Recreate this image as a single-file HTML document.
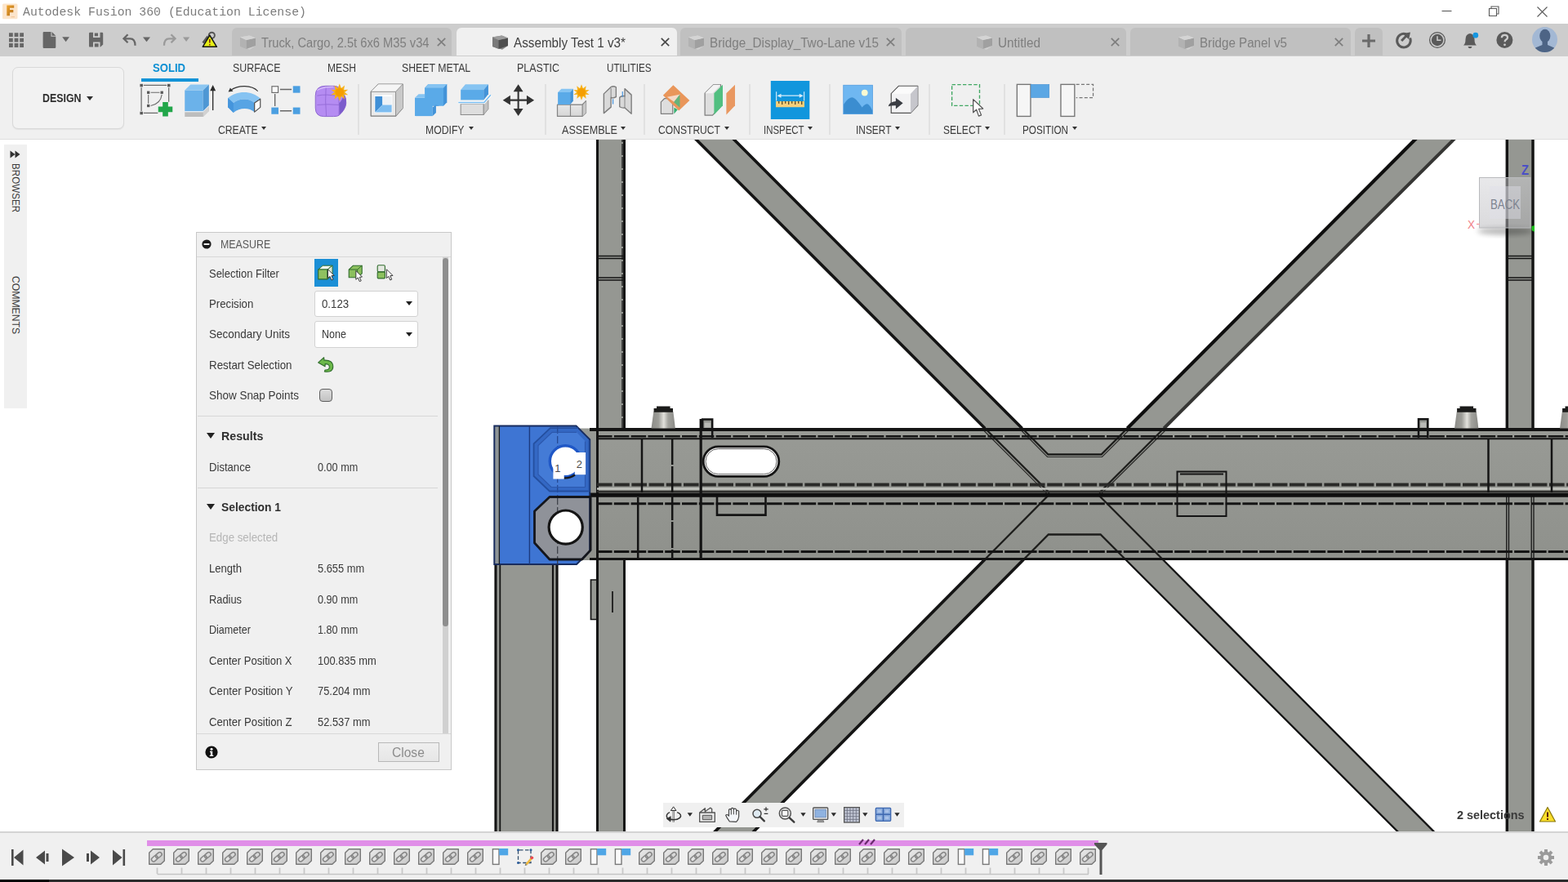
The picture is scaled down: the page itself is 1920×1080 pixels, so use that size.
<!DOCTYPE html>
<html lang="en"><head><meta charset="utf-8"><title>Autodesk Fusion 360 (Education License)</title>
<style>
*{box-sizing:border-box;margin:0;padding:0}
html,body{width:1920px;height:1080px;overflow:hidden;background:#fff}
body{position:relative;font-family:"Liberation Sans",Arial,sans-serif;font-size:14px;color:#333}
.abs{position:absolute}
.t{position:absolute;white-space:nowrap;line-height:1;transform-origin:0 0}
svg{position:absolute;overflow:visible}
.vt{position:absolute;white-space:nowrap;font-size:12.5px;color:#3a3a3a;transform-origin:0 0;line-height:1}
</style></head>
<body>
<svg width="0" height="0" style="left:0;top:0"><defs>
<g id="cube-i"><path d="M1 4.500L12.500 2.500 20 5.500V15l-7 4.800L1 16z" fill="#d0d0d0"/><path d="M1 4.500L8.500 8v11L1 16z" fill="#b2b2b2"/><path d="M8.500 8L20 5.500V15l-11.500 4z" fill="#a0a0a0"/><path d="M1 4.500l11.500-2L20 5.500 8.500 8z" fill="#d4d4d4"/></g>
<g id="cube-a"><path d="M1 4.500L12.500 2.500 20 5.500V15l-7 4.800L1 16z" fill="#888"/><path d="M1 4.500L8.500 8v11L1 16z" fill="#7a7a7a"/><path d="M8.500 8L20 5.500V15l-11.500 4z" fill="#4e4e4e"/><path d="M1 4.500l11.500-2L20 5.500 8.500 8z" fill="#9c9c9c"/></g>
</defs></svg>

<div class="abs" style="left:0px;top:0px;width:1920px;height:29px;background:#fff"></div>
<div class="t" style="left:27.50px;top:7.96px;font-size:14.8px;color:#7c7c7c;transform:scaleX(1.0018);font-family:'Liberation Mono','DejaVu Sans Mono',monospace;">Autodesk Fusion 360 (Education License)</div>
<svg style="left:0;top:0" width="30" height="29" viewBox="0 0 30 29">
<defs><linearGradient id="fg" x1="0" x2="1" y1="0" y2="1"><stop offset="0" stop-color="#f0a52c"/><stop offset="1" stop-color="#b06c1a"/></linearGradient></defs>
<rect x="3" y="4.500" width="18.500" height="18.800" rx="1.500" fill="#fce5cb"/>
<path d="M8.300 6.400h8.900v3.300h-5.200v2.400h4.300v3.100h-4.300v4h-3.700z" fill="url(#fg)"/>
<rect x="13.500" y="20" width="4.500" height="1.300" fill="#f3c9a0"/>
</svg>
<svg style="left:1760px;top:0" width="160" height="29" viewBox="1760 0 160 29" fill="none" stroke="#5a5a5a" stroke-width="1.100">
<path d="M1765.500 13.500h12"/>
<path d="M1823.500 10.500h9v9h-9zM1826 10.500v-2.500h9v9h-2.500"/>
<path d="M1882.500 8.500l12 12M1894.500 8.500l-12 12"/>
</svg>

<div class="abs" style="left:0px;top:29px;width:1920px;height:39.5px;background:#cdcdcd"></div>
<div class="abs" style="left:283.7px;top:34.3px;width:269.8px;height:34.2px;border-radius:6px 6px 0 0;background:#c0c0c0"></div>
<div class="t" style="left:319.50px;top:44.65px;font-size:16px;color:#7e7e7e;transform:scaleX(0.9194);">Truck, Cargo, 2.5t 6x6 M35 v34</div>
<svg style="left:293px;top:41px" width="21" height="21" viewBox="0 0 21 21"><use href="#cube-i"/></svg>
<svg style="left:534.5px;top:45.800px" width="11" height="11" viewBox="0 0 11 11"><path d="M.8.8l9.400 9.400M10.200.8L.8 10.200" stroke="#7e7e7e" stroke-width="1.700" fill="none"/></svg>
<div class="abs" style="left:559px;top:34.3px;width:269.5px;height:34.2px;border-radius:6px 6px 0 0;background:#f0f0f0"></div>
<div class="t" style="left:628.50px;top:44.65px;font-size:16px;color:#3f3f3f;transform:scaleX(0.9530);">Assembly Test 1 v3*</div>
<svg style="left:602px;top:41px" width="21" height="21" viewBox="0 0 21 21"><use href="#cube-a"/></svg>
<svg style="left:808.5px;top:45.800px" width="11" height="11" viewBox="0 0 11 11"><path d="M.8.8l9.400 9.400M10.200.8L.8 10.200" stroke="#4a4a4a" stroke-width="1.700" fill="none"/></svg>
<div class="abs" style="left:832.5px;top:34.3px;width:271.5px;height:34.2px;border-radius:6px 6px 0 0;background:#c0c0c0"></div>
<div class="t" style="left:869.00px;top:44.65px;font-size:16px;color:#7e7e7e;transform:scaleX(0.9538);">Bridge_Display_Two-Lane v15</div>
<svg style="left:842px;top:41px" width="21" height="21" viewBox="0 0 21 21"><use href="#cube-i"/></svg>
<svg style="left:1084.5px;top:45.800px" width="11" height="11" viewBox="0 0 11 11"><path d="M.8.8l9.400 9.400M10.200.8L.8 10.200" stroke="#7e7e7e" stroke-width="1.700" fill="none"/></svg>
<div class="abs" style="left:1109px;top:34.3px;width:269.5px;height:34.2px;border-radius:6px 6px 0 0;background:#c0c0c0"></div>
<div class="t" style="left:1221.50px;top:44.65px;font-size:16px;color:#7e7e7e;transform:scaleX(0.9584);">Untitled</div>
<svg style="left:1195px;top:41px" width="21" height="21" viewBox="0 0 21 21"><use href="#cube-i"/></svg>
<svg style="left:1359.5px;top:45.800px" width="11" height="11" viewBox="0 0 11 11"><path d="M.8.8l9.400 9.400M10.200.8L.8 10.200" stroke="#7e7e7e" stroke-width="1.700" fill="none"/></svg>
<div class="abs" style="left:1384px;top:34.3px;width:269.5px;height:34.2px;border-radius:6px 6px 0 0;background:#c0c0c0"></div>
<div class="t" style="left:1468.50px;top:44.65px;font-size:16px;color:#7e7e7e;transform:scaleX(0.9472);">Bridge Panel v5</div>
<svg style="left:1442px;top:41px" width="21" height="21" viewBox="0 0 21 21"><use href="#cube-i"/></svg>
<svg style="left:1633.5px;top:45.800px" width="11" height="11" viewBox="0 0 11 11"><path d="M.8.8l9.400 9.400M10.200.8L.8 10.200" stroke="#7e7e7e" stroke-width="1.700" fill="none"/></svg>
<div class="abs" style="left:1659px;top:34.3px;width:34px;height:34.2px;border-radius:6px 6px 0 0;background:#c0c0c0"></div>
<svg style="left:0;top:29px" width="290" height="40" viewBox="0 29 290 40">
<g fill="#666">
<path d="M11 40.300h4.800v4.800H11zM17.600 40.300h4.800v4.800h-4.800zM24.200 40.300H29v4.800h-4.800zM11 46.700h4.800v4.800H11zM17.600 46.700h4.800v4.800h-4.800zM24.200 46.700H29v4.800h-4.800zM11 53.100h4.800v4.800H11zM17.600 53.100h4.800v4.800h-4.800zM24.200 53.100H29v4.800h-4.800z"/>
<path d="M52.600 40.200q0-1.200 1.200-1.200h8.700v5.800h5.800v12.900q0 1.200-1.200 1.200H53.800q-1.200 0-1.200-1.200zM63.500 39l4.800 4.800h-4.800z"/>
<path d="M76.200 45.300h8.800l-4.400 6z"/>
<path d="M109 41q0-1.200 1.200-1.200H125q1.200 0 1.200 1.200v13.400l-3.200 3.200h-12.800q-1.200 0-1.200-1.200zM114 39.800v6.200h8.500v-6.200zM114 51.500v6.100h8.500v-6.100z" fill-rule="evenodd"/>
<path d="M115.800 40.500h4.200v3.800h-4.200zM115.800 53.200h4.800v4.400h-4.800z"/>
<path d="M175 45.500h9l-4.500 5.700z"/>
</g>
<path d="M156.500 42.300l-5 5 5 5M152 47.300h7.500q6 0 6 8.500" fill="none" stroke="#666" stroke-width="2.300"/>
<path d="M209.500 42.300l5 5-5 5M214 47.300h-7q-6 0-6 8.500" fill="none" stroke="#9a9a9a" stroke-width="2.300"/>
<path d="M224 45.500h8.200l-4.100 5.500z" fill="#9a9a9a"/>
<circle cx="259.300" cy="43.300" r="3.600" fill="none" stroke="#555" stroke-width="1.900"/>
<path d="M254.500 44.500l-6 8" stroke="#555" stroke-width="2.600" fill="none"/>
<path d="M256.800 43.200l8.600 14.100h-17.200z" fill="#e6ee14" stroke="#151515" stroke-width="1.500" stroke-linejoin="round"/>
<path d="M256.800 48v4.600M256.800 54v1.600" stroke="#7a1a10" stroke-width="1.500"/>
</g>
</svg>
<svg style="left:1640px;top:29px" width="280" height="40" viewBox="1640 29 280 40">
<path d="M1668 50h16M1676 42v16" stroke="#6a6a6a" stroke-width="3.200" fill="none"/>
<!-- extensions/refresh -->
<path d="M1721.500 41.800A8.300 8.300 0 1 0 1726.600 46.500" fill="none" stroke="#5a5a5a" stroke-width="3"/>
<path d="M1727 39.500l-1.800 8.500-3-2.200-5 5.200-2.200-2 5.200-5.200-2.500-2.800z" fill="#5a5a5a"/>
<!-- job status clock -->
<circle cx="1760" cy="49" r="9.400" fill="none" stroke="#5a5a5a" stroke-width="1.300"/>
<circle cx="1760" cy="49" r="7.200" fill="#5a5a5a"/><path d="M1760 44.300v5h4.500" stroke="#cdcdcd" stroke-width="1.500" fill="none"/>
<!-- bell -->
<path d="M1792 55.500q2.500-2 2.500-7.500 0-6 5.500-7 5.500 1 5.500 7 0 5.500 2.500 7.500z" fill="#5a5a5a"/><path d="M1797.500 57h5q-.5 2.200-2.500 2.200t-2.500-2.200z" fill="#5a5a5a"/>
<circle cx="1806.800" cy="43.200" r="3.400" fill="#1696e0"/>
<!-- help -->
<circle cx="1842.400" cy="49" r="10" fill="#5a5a5a"/>
<path d="M1838.800 46.200q.2-3.400 3.700-3.400 3.500 0 3.500 3 0 1.800-1.800 2.800-1.600.9-1.600 2.600" fill="none" stroke="#cdcdcd" stroke-width="2.300"/><circle cx="1842.500" cy="54.800" r="1.400" fill="#cdcdcd"/>
<!-- avatar -->
<defs><clipPath id="avc"><circle cx="1891.500" cy="48.500" r="15.500"/></clipPath></defs>
<circle cx="1891.500" cy="48.500" r="15.500" fill="#a3b8d4"/>
<g clip-path="url(#avc)" fill="#4d6485"><ellipse cx="1891.800" cy="44" rx="6.600" ry="8.200"/><path d="M1888.500 50h6.500v5l8 3.500q2 1 2 3.500v4h-27v-4q0-2.500 2-3.500l8.500-3.500z"/></g>
</svg>

<div class="abs" style="left:0px;top:68.5px;width:1920px;height:102.5px;background:#f0f0f0;border-bottom:1px solid #dedede"></div>
<div class="abs" style="left:15px;top:82px;width:137px;height:76px;border:1px solid #d9d9d9;border-radius:7px;background:#f2f2f2;box-shadow:0 1px 1px #e2e2e2"></div>
<div class="t" style="left:52.00px;top:113.02px;font-size:14.5px;color:#2e2e2e;transform:scaleX(0.8544);font-weight:bold;">DESIGN</div>
<div class="abs" style="left:105.5px;top:117.5px;width:0;height:0;border-left:4px solid transparent;border-right:4px solid transparent;border-top:5px solid #2e2e2e"></div>
<div class="t" style="left:187.00px;top:75.92px;font-size:14.5px;color:#0b8fd3;transform:scaleX(0.9027);font-weight:bold;">SOLID</div>
<div class="abs" style="left:173px;top:95.5px;width:70px;height:4px;background:#1393d7"></div>
<div class="t" style="left:284.50px;top:75.92px;font-size:14.5px;color:#3c3c3c;transform:scaleX(0.8542);">SURFACE</div>
<div class="t" style="left:400.50px;top:75.92px;font-size:14.5px;color:#3c3c3c;transform:scaleX(0.8355);">MESH</div>
<div class="t" style="left:492.00px;top:75.92px;font-size:14.5px;color:#3c3c3c;transform:scaleX(0.8472);">SHEET METAL</div>
<div class="t" style="left:633.00px;top:75.92px;font-size:14.5px;color:#3c3c3c;transform:scaleX(0.8604);">PLASTIC</div>
<div class="t" style="left:743.00px;top:75.92px;font-size:14.5px;color:#3c3c3c;transform:scaleX(0.8052);">UTILITIES</div>
<div class="t" style="left:267.00px;top:151.92px;font-size:14.5px;color:#3c3c3c;transform:scaleX(0.8400);">CREATE</div>
<div class="abs" style="left:320.3px;top:155.3px;width:0;height:0;border-left:3.5px solid transparent;border-right:3.5px solid transparent;border-top:4.5px solid #333"></div>
<div class="t" style="left:520.50px;top:151.92px;font-size:14.5px;color:#3c3c3c;transform:scaleX(0.8423);">MODIFY</div>
<div class="abs" style="left:574.3px;top:155.3px;width:0;height:0;border-left:3.5px solid transparent;border-right:3.5px solid transparent;border-top:4.5px solid #333"></div>
<div class="t" style="left:687.50px;top:151.92px;font-size:14.5px;color:#3c3c3c;transform:scaleX(0.8699);">ASSEMBLE</div>
<div class="abs" style="left:759.8px;top:155.3px;width:0;height:0;border-left:3.5px solid transparent;border-right:3.5px solid transparent;border-top:4.5px solid #333"></div>
<div class="t" style="left:805.50px;top:151.92px;font-size:14.5px;color:#3c3c3c;transform:scaleX(0.8350);">CONSTRUCT</div>
<div class="abs" style="left:886.8px;top:155.3px;width:0;height:0;border-left:3.5px solid transparent;border-right:3.5px solid transparent;border-top:4.5px solid #333"></div>
<div class="t" style="left:934.50px;top:151.92px;font-size:14.5px;color:#3c3c3c;transform:scaleX(0.7877);">INSPECT</div>
<div class="abs" style="left:988.8px;top:155.3px;width:0;height:0;border-left:3.5px solid transparent;border-right:3.5px solid transparent;border-top:4.5px solid #333"></div>
<div class="t" style="left:1047.50px;top:151.92px;font-size:14.5px;color:#3c3c3c;transform:scaleX(0.8221);">INSERT</div>
<div class="abs" style="left:1095.8px;top:155.3px;width:0;height:0;border-left:3.5px solid transparent;border-right:3.5px solid transparent;border-top:4.5px solid #333"></div>
<div class="t" style="left:1154.50px;top:151.92px;font-size:14.5px;color:#3c3c3c;transform:scaleX(0.8333);">SELECT</div>
<div class="abs" style="left:1205.8px;top:155.3px;width:0;height:0;border-left:3.5px solid transparent;border-right:3.5px solid transparent;border-top:4.5px solid #333"></div>
<div class="t" style="left:1252.00px;top:151.92px;font-size:14.5px;color:#3c3c3c;transform:scaleX(0.8083);">POSITION</div>
<div class="abs" style="left:1312.8px;top:155.3px;width:0;height:0;border-left:3.5px solid transparent;border-right:3.5px solid transparent;border-top:4.5px solid #333"></div>
<div class="abs" style="left:437.7px;top:103px;width:2px;height:62px;background:#e1e1e1"></div>
<div class="abs" style="left:666.5px;top:103px;width:2px;height:62px;background:#e1e1e1"></div>
<div class="abs" style="left:787.5px;top:103px;width:2px;height:62px;background:#e1e1e1"></div>
<div class="abs" style="left:916.5px;top:103px;width:2px;height:62px;background:#e1e1e1"></div>
<div class="abs" style="left:1015px;top:103px;width:2px;height:62px;background:#e1e1e1"></div>
<div class="abs" style="left:1136.5px;top:103px;width:2px;height:62px;background:#e1e1e1"></div>
<div class="abs" style="left:1229.2px;top:103px;width:2px;height:62px;background:#e1e1e1"></div>
<svg style="left:0;top:94px" width="1400" height="58" viewBox="0 94 1400 58">
<defs>
<g id="burst"><path d="M0-10.500L2.100-5.100 6.200-8.500 5.300-3 10.500-3.300 6.300 0 10.500 3.300 5.300 3 6.200 8.500 2.100 5.100 0 10.500-2.100 5.100-6.200 8.500-5.300 3-10.500 3.300-6.300 0-10.500-3.300-5.300-3-6.200-8.500-2.100-5.100z" fill="#f7b21a"/><circle r="5.400" fill="#f59e00"/></g>
<linearGradient id="gface" x1="0" x2="0" y1="0" y2="1"><stop offset="0" stop-color="#ededed"/><stop offset="1" stop-color="#d6d6d6"/></linearGradient>
</defs>
<!-- create sketch -->
<g transform="translate(165 98) scale(.083333)">
<g fill="none" stroke="#6a6a6a" stroke-width="15">
<path d="M130 78H470M97 110V455M500 110V320M130 485H340"/>
<path d="M235 183H365M200 215V345M398 215Q380 350 235 378" stroke-width="13"/>
</g>
<g fill="#585858"><rect x="77" y="58" width="42" height="42"/><rect x="480" y="58" width="42" height="42"/><rect x="77" y="465" width="42" height="42"/><rect x="180" y="163" width="40" height="40"/><rect x="378" y="163" width="40" height="40"/><rect x="180" y="358" width="40" height="40"/></g>
<path d="M410 325h80v65h65v80h-65v65h-80v-65h-65v-80h65z" fill="#22a64a"/>
</g>
<!-- extrude -->
<g transform="translate(165 98) scale(.083333)">
<path d="M735 470h270l85-85v70l-85 85H735z" fill="#bdbdbd"/><path d="M1005 470l85-85v70l-85 85z" fill="#d2d2d2"/>
<path d="M735 150h270v310H735z" fill="#6bb2ea"/><path d="M735 150l85-85h270l-85 85z" fill="#8cc6f1"/><path d="M1005 150l85-85v310l-85 85z" fill="#4e97d4"/>
<path d="M735 463h270l85-85" fill="none" stroke="#eef6fc" stroke-width="9"/>
<path d="M1148 445V150" stroke="#2b2b2b" stroke-width="16" fill="none"/><path d="M1148 72l42 88h-84z" fill="#2b2b2b"/>
</g>
<!-- revolve -->
<g transform="translate(165 98) scale(.083333)">
<path d="M1370 265C1500 150 1720 150 1850 275L1760 335C1680 265 1540 265 1450 335z" fill="#86c3f2"/>
<path d="M1370 265L1450 335C1540 265 1680 265 1760 335V470C1680 400 1540 400 1450 480L1370 400z" fill="#57a4e4"/>
<path d="M1370 265L1450 335V480L1370 400z" fill="#4595dc"/>
<path d="M1760 335L1845 278V400L1760 470z" fill="#fdfdfd" stroke="#4a4a4a" stroke-width="14" stroke-linejoin="round"/>
<path d="M1810 165C1720 70 1520 70 1410 150" fill="none" stroke="#333" stroke-width="13"/><path d="M1375 175l28-62 42 52z" fill="#333"/>
</g>
<!-- rectangular pattern -->
<g transform="translate(325 98) scale(.083333)">
<path d="M215 138H385M140 205V385M215 453H385" stroke="#666" stroke-width="16" fill="none"/>
<rect x="95" y="93" width="92" height="92" fill="#fafafa" stroke="#6c6c6c" stroke-width="14"/>
<g fill="#4b9fe1"><rect x="405" y="88" width="105" height="100"/><rect x="88" y="403" width="104" height="98"/><rect x="405" y="403" width="105" height="98"/></g>
</g>
<!-- create form -->
<g transform="translate(325 98) scale(.083333)">
<path d="M735 230Q735 90 880 88H1010Q1090 88 1150 200Q1190 260 1185 340Q1180 430 1080 520Q1060 535 1000 535H860Q735 535 735 410z" fill="#b58cf2" stroke="#8d66cf" stroke-width="12"/>
<path d="M1080 340Q1130 300 1150 215Q1190 270 1183 345Q1178 430 1085 515z" fill="#7c5ccc"/>
<path d="M760 230Q900 200 1075 240M890 100Q875 300 895 528M760 365Q900 350 1080 365M1075 240Q1090 380 1080 520" fill="none" stroke="#9068d4" stroke-width="10"/>
<path d="M760 150Q850 95 1000 100" fill="none" stroke="#d9c2fa" stroke-width="14"/>
</g>
<use href="#burst" x="415.800" y="113"/>
<!-- shell -->
<g transform="translate(445 98) scale(.114583)">
<path d="M80 125l80-80h260v255l-75 85H80z" fill="#e9e9e9" stroke="#7a7a7a" stroke-width="11" stroke-linejoin="round"/>
<path d="M345 125l75-80v255l-75 85z" fill="#c9c9c9"/><path d="M80 125l80-80h260l-75 80z" fill="#f5f5f5"/>
<path d="M80 125h265v260M345 125l75-80" fill="none" stroke="#8a8a8a" stroke-width="8"/>
<rect x="118" y="160" width="190" height="192" fill="#fff"/>
<path d="M125 175h78v92l-78 78z" fill="#3f8fd6"/><path d="M125 345l80-80h97v80z" fill="#7dbdf0"/>
<path d="M205 175h97v90h-97z" fill="#eef2f6"/>
</g>
<!-- combine -->
<g transform="translate(445 98) scale(.114583)">
<path d="M655 85l38-42h200v195l-38 40z" fill="#4393d8"/><path d="M655 85h200v192H655z" fill="#5aaae8"/><path d="M655 85l38-42h200l-38 42z" fill="#86c4f2"/>
<path d="M550 190h190v195H550z" fill="#5aaae8"/><path d="M550 190l40-40h65v40z" fill="#86c4f2"/><path d="M740 290l36-24v84l-36 35z" fill="#4393d8"/>
<path d="M740 277h115l-40 0-39-12z" fill="#4d9de0"/>
</g>
<!-- split body -->
<g transform="translate(445 98) scale(.114583)">
<path d="M1040 255h245v115h-245z" fill="#dedede" stroke="#8a8a8a" stroke-width="9"/><path d="M1285 255l50-42v97l-50 60z" fill="#c2c2c2" stroke="#8a8a8a" stroke-width="7"/>
<path d="M1040 105h245v108h-245z" fill="#5aaae8"/><path d="M1040 105l50-60h245l-50 60z" fill="#86c4f2"/><path d="M1285 105l50-60v105l-50 63z" fill="#4393d8"/>
<path d="M1015 240h275l70-80" fill="none" stroke="#fff" stroke-width="30"/><path d="M1015 240h275l70-80" fill="none" stroke="#79bdf0" stroke-width="14"/>
</g>
<!-- move -->
<g transform="translate(445 98) scale(.114583)" fill="#333">
<path d="M1655 45l52 80h-104zM1655 385l52-80h-104zM1490 215l80-52v104zM1825 215l-80-52v104z"/><path d="M1646 110h18v210h-18zM1550 206h210v18h-210z"/>
</g>
<!-- new component -->
<g transform="translate(670 98) scale(.125)">
<path d="M100 240h245l35-35v115l-35 35H100z" fill="url(#gface)" stroke="#858585" stroke-width="10" stroke-linejoin="round"/>
<path d="M230 240l35-35h115l-35 35z" fill="#f2f2f2"/><path d="M345 240l35-35v115l-35 35z" fill="#c9c9c9"/>
<path d="M228 240V355M228 240H345V355M345 240l35-35" fill="none" stroke="#858585" stroke-width="9"/>
<path d="M105 120h120v120H105z" fill="#5aaae8"/><path d="M105 120l35-35h115l-30 35z" fill="#86c4f2"/><path d="M225 120l30-35v120l-30 35z" fill="#4393d8"/>
</g>
<use href="#burst" x="712" y="113" transform="translate(712 113) scale(.92) translate(-712 -113)"/>
<!-- joint -->
<g transform="translate(670 98) scale(.125)" stroke="#7c7c7c" stroke-width="11" stroke-linejoin="round">
<path d="M555 135L625 68Q650 55 675 70V165Q650 180 625 172V265L555 325z" fill="#d9d9d9"/>
<path d="M625 80V172" fill="none" stroke-width="7"/>
<path d="M760 85L825 145V330L760 272Q730 275 710 262V170Q730 150 760 158z" fill="#d9d9d9"/>
<path d="M760 158V272" fill="none" stroke-width="7"/>
<path d="M645 185V235M738 112V165" stroke="#3b8edc" stroke-width="9" fill="none"/>
</g>
<!-- offset plane -->
<g transform="translate(670 98) scale(.125)">
<path d="M1115 215l35-35h80v150h-115z" fill="#dedede" stroke="#7f7f7f" stroke-width="10" stroke-linejoin="round"/>
<path d="M1235 50L1395 200 1290 300 1135 150z" fill="#e9965a"/>
<path d="M1175 165L1305 140 1245 215z" fill="#f6d9c6"/>
<path d="M1300 140L1300 270 1240 215z" fill="#55b77e" opacity=".9"/>
<path d="M1243 268l35 22-35 42z" fill="#35b070"/>
</g>
<!-- midplane -->
<g transform="translate(670 98) scale(.125)">
<path d="M1545 130l85-85h70v215l-80 85h-75z" fill="#dedede" stroke="#7f7f7f" stroke-width="10" stroke-linejoin="round"/>
<path d="M1545 130l85-85h70l-80 85z" fill="#f4f4f4"/>
<path d="M1635 130l85-85v205l-85 90z" fill="#52bf80"/>
<path d="M1755 130l85-85v205l-85 90z" fill="#e99861"/>
</g>
<!-- inspect -->
<rect x="943.800" y="99" width="47.500" height="47" fill="#1196dd"/>
<g transform="translate(930 94) scale(.125)">
<rect x="160" y="240" width="280" height="58" fill="#f6cf7a"/>
<path d="M190 240v22M222 240v32M254 240v22M286 240v32M318 240v22M350 240v32M382 240v22M414 240v32" stroke="#3a3320" stroke-width="9" fill="none"/>
<path d="M165 145V235M437 145V235M195 185H410" stroke="#d6ecfa" stroke-width="9" fill="none"/>
<path d="M172 185l40-20v40zM430 185l-40-20v40z" fill="#d6ecfa"/>
</g>
<!-- insert image -->
<g transform="translate(930 94) scale(.125)">
<rect x="822" y="82" width="286" height="283" fill="#6fb7f1" stroke="#4f9be0" stroke-width="6"/>
<path d="M825 362V270Q880 190 920 205Q950 215 1005 300Q1045 255 1065 270Q1085 285 1105 330V362z" fill="#3b8dd0"/>
<circle cx="1030" cy="156" r="31" fill="#fbfad2"/>
</g>
<!-- derive -->
<g transform="translate(930 94) scale(.125)">
<path d="M1290 165l75-75h185v190l-70 75h-190z" fill="#f2f2f3" stroke="#555" stroke-width="10" stroke-linejoin="round"/>
<path d="M1480 165l70-75v190l-70 75z" fill="#c6c6cc"/><path d="M1295 165l72-72h180l-68 72z" fill="#fbfbfb"/>
<path d="M1262 290Q1270 245 1335 240V205L1405 258 1335 315V282Q1290 280 1262 290z" fill="#3a3d43"/>
</g>
<!-- select -->
<g transform="translate(1150 94) scale(.104167)">
<rect x="150" y="92" width="325" height="248" fill="none" stroke="#3fa761" stroke-width="13" stroke-dasharray="42 22"/>
<path d="M400 265V420L438 385 465 462 495 450 465 378 515 375z" fill="#fff" stroke="#555" stroke-width="12" stroke-linejoin="round"/>
</g>
<!-- position -->
<g transform="translate(1150 94) scale(.104167)">
<rect x="915" y="90" width="160" height="375" fill="#f6f6f6" stroke="#757575" stroke-width="13"/>
<rect x="1078" y="90" width="215" height="155" fill="#5ba7e4" stroke="#4a93d2" stroke-width="6"/>
<rect x="1430" y="90" width="162" height="375" fill="#f6f6f6" stroke="#757575" stroke-width="13"/>
<path d="M1610 90h200v155h-200" fill="none" stroke="#757575" stroke-width="12" stroke-dasharray="38 22"/>
</g>
</svg>

<div class="abs" style="left:5px;top:177px;width:28px;height:323px;background:#f0f0f0"></div>
<div class="vt" style="left:24.500px;top:200px;transform:rotate(90deg) scaleX(0.93)">BROWSER</div>
<div class="vt" style="left:24.500px;top:338px;transform:rotate(90deg) scaleX(0.975)">COMMENTS</div>
<svg style="left:12px;top:184px" width="13" height="10" viewBox="0 0 13 10"><path d="M.5.5l6 4.500-6 4.500zM6.500.5l6 4.500-6 4.500z" fill="#333"/></svg>
<svg id="vp" style="left:0;top:171px;overflow:hidden" width="1920" height="847" viewBox="0 171 1920 847">
<defs>
<linearGradient id="cone" x1="0" x2="1" y1="0" y2="0"><stop offset="0" stop-color="#8c8c88"/><stop offset=".3" stop-color="#9d9d98"/><stop offset=".52" stop-color="#e2e1dc"/><stop offset=".7" stop-color="#a3a39e"/><stop offset="1" stop-color="#8a8a86"/></linearGradient>
<linearGradient id="steel" x1="0" x2="0" y1="0" y2="1"><stop offset="0" stop-color="#989a95"/><stop offset="1" stop-color="#8f918c"/></linearGradient>
</defs>
<g id="fills" fill="#959792" stroke="none">
<!-- X brace arms -->
<path d="M841.600 160L1285 603.500 1346 603.500 1790.900 160 1743.600 160 1348.500 556.500 1283.500 556.500 888 160z"/>
<path d="M865.800 1028L1283.800 606.500 1345.500 606.500 1765.500 1028 1721.200 1028 1347.600 654.500 1283.800 654.500 913.200 1028z"/>
<!-- columns -->
<rect x="730.500" y="160" width="35.500" height="870"/>
<rect x="1844" y="160" width="34.500" height="870"/>
<rect x="605.500" y="685" width="78" height="345"/>
<!-- main beam -->
<rect x="605.500" y="524.500" width="1330" height="161.500" fill="url(#steel)"/>
<!-- small tabs on top of beam -->
<rect x="859.500" y="513" width="13" height="14"/>
<rect x="1736" y="512.500" width="13" height="14"/>
<rect x="723" y="710" width="8" height="48.500"/>
</g>
<g id="lines" fill="none" stroke="#141414" stroke-linecap="butt">
<!-- X brace: outside-beam thick edges -->
<path d="M841.600 160L1206.100 524.500M888 160L1251.600 524.500" stroke-width="3.600"/>
<path d="M1743.600 160L1380.400 524.500" stroke-width="4.200" stroke="#0e0e0e"/>
<path d="M1790.900 160L1425.200 524.500" stroke-width="4" stroke="#363634"/>
<path d="M865.800 1028L1206 685M913.200 1028L1253.500 685" stroke-width="3.700"/>
<path d="M1765.500 1028L1423.700 685M1721.200 1028L1378.100 685" stroke-width="2.300"/>
<!-- X brace: inside beam (hidden-ish) -->
<g stroke-width="2.300" stroke="#1d1d1b">
<path d="M1206.100 524.500L1285 603.500M1251.600 524.500L1283.500 556.500H1348.500L1380.400 524.500M1425.200 524.500L1346 603.500"/>
<path d="M1206 685L1283.800 606.500M1253.500 685L1283.800 654.500H1347.600L1378.100 685M1423.700 685L1345.500 606.500"/>
</g>
<g stroke-width="1.200" stroke="#2a2a28">
<path d="M1203.500 526L1281.500 604M1249.500 526L1282.500 559.500H1349.500L1383 526M1428 526L1349 604"/>
</g>
<!-- columns -->
<g stroke-width="3">
<path d="M731.500 160V1030M764.500 160V524.500M764.500 685V1030"/>
<path d="M1845.300 160V524.500M1877 160V524.500M1845.300 685V1030M1877 685V1030" stroke-width="3.400"/>
<path d="M607 691V1030M682 691V1030"/>
</g>
<g stroke-width="1.300">
<path d="M762 160V524" stroke-dasharray="14 2"/>
<path d="M612.300 691V1030" stroke-width="1.800"/><path d="M677 691V1030" stroke-width="2.200"/>
<path d="M1844.800 607V684M1847.500 607V684M1875.200 607V684M1878 607V684"/>
</g>
<g stroke-width="1.600">
<path d="M733 313.500H763M733 316.500H763M733 340H763M733 343H763"/>
<path d="M1847 313.500H1876M1847 316.500H1876M1847 340H1876M1847 343H1876"/>
</g>
<!-- beam horizontals -->
<path d="M722 526H1920" stroke-width="3.800"/>
<path d="M722 684.500H1920" stroke-width="3.200"/>
<path d="M731 598.500H1920" stroke-width="2.400" stroke="#c2c3be"/>
<path d="M722 606.200H1920" stroke-width="5.200" stroke="#0f0f0f"/>
<path d="M731 601.900H1920" stroke-width="2.400" stroke="#30302e"/>
<path d="M731 537.200H1920" stroke-width="2"/>
<path d="M731 534.300H1920" stroke-width="2.600" stroke-dasharray="18.600 2.200"/>
<path d="M731 593.400H1920" stroke-width="4" stroke="#2a2a28" stroke-dasharray="18.600 2.600"/>
<path d="M731 616.800H1920" stroke-width="3" stroke-dasharray="18.600 2.200"/>
<path d="M731 675.600H1920" stroke-width="3" stroke-dasharray="18.600 2.200"/>
<!-- beam verticals -->
<g stroke-width="2.500">
<path d="M786 537V603M781.200 609V684M1822.500 537V603M1900 537V603"/>
<path d="M823.200 537V684" stroke-dasharray="32 2"/>
</g>
<path d="M858.200 513V684" stroke-width="3.200"/>
<!-- small tabs -->
<path d="M860.200 526V513.400H872.200V536" stroke-width="2.500"/><rect x="862.600" y="517.500" width="7.400" height="6" fill="#b9bab6" stroke="none"/>
<path d="M1737 536V513.200H1748.300V536" stroke-width="2.500"/><rect x="1739.300" y="517.300" width="6.800" height="6" fill="#b9bab6" stroke="none"/>
<path d="M731 710H723.500V758.500H731M750 724V750" stroke-width="1.700"/>
<!-- rects -->
<path d="M878 608V630.600H937.500V608" stroke-width="2.600"/>
<path d="M1441.500 577.500H1501.500V632H1441.500zM1445 580.500H1498" stroke-width="2"/>
</g>
<!-- slot -->
<rect x="861.200" y="546.800" width="92.600" height="36.600" rx="18.300" fill="#fff" stroke="#161616" stroke-width="2.800"/>
<rect x="864" y="549.600" width="87" height="31" rx="15.500" fill="none" stroke="#3a3a3a" stroke-width=".8"/>
<!-- cones -->
<g id="conepin"><path d="M800.300 504H824.400L826.900 524.500H797.500z" fill="url(#cone)"/><path d="M804 497.500H820.600V500H824V504.700H800.600V500H804z" fill="#1b1b1a"/></g>
<use href="#conepin" x="983.500"/>
<use href="#conepin" x="1112.500"/>

<!-- selected (blue) bracket with lugs -->
<path d="M605.300 521.400H705.500L722.200 538.100V675L706 691H605.300z" fill="#3e75d3"/>
<rect x="605.300" y="521.400" width="6" height="169.600" fill="#8d9497"/>
<!-- upper lug (selected) -->
<path d="M653.600 543.400L673.900 524.100H708L721.400 538V601.500H673L653.600 583z" fill="#3468c4"/>
<path d="M659 545.600L676 529.300H706L716.500 540V596.500H675L659 581z" fill="#447bd6"/>
<!-- lower lug (grey) -->
<path d="M654.500 626L673 608.500H723.100V673.600L712.600 685H673L654.500 664.800z" fill="#8f9299"/>
<g fill="none" stroke="#1f3f86" stroke-width="1.600">
<path d="M605.300 521.400H705.500L722.200 538.100V675L706 691H605.300z" stroke="#182c5e" stroke-width="2"/>
<path d="M648.400 522V691" stroke-width="1.400" stroke="#1d3a80"/>
<path d="M682.700 522V608" stroke-width="1.200" stroke-dasharray="9 3" stroke="#24468f"/>
<path d="M682.700 609V691" stroke-width="1.200" stroke-dasharray="9 3" stroke="#3a3d46"/>
<path d="M611.400 522V691" stroke-width="1.300" stroke="#1a1a1a"/>
<path d="M708 524.100H673.900L653.600 543.400V583L673 601.500H721.400V539" stroke="#244f9f" stroke-width="1.800"/>
<path d="M706 529.300H676L659 545.600V581L675 596.500H716.500V540.500" stroke="#2c58ad" stroke-width="1.200"/>
</g>
<path d="M654.500 626L673 608.500H723.100V673.600L712.600 685H673L654.500 664.800z" fill="none" stroke="#14161c" stroke-width="2.800" stroke-linejoin="round"/>
<circle cx="692.300" cy="564.800" r="19" fill="#fff" stroke="#1f57c6" stroke-width="3.400"/>
<path d="M690.500 585.300A20.600 20.600 0 0 0 704 581.500" fill="none" stroke="#16181c" stroke-width="2.200"/>
<circle cx="692.700" cy="645.600" r="20.600" fill="#fff" stroke="#141414" stroke-width="3.200"/>
<rect x="677.400" y="560" width="13.300" height="26.500" fill="#fff"/>
<rect x="703.800" y="554" width="13.300" height="27.200" fill="#fff"/>
<text x="679.200" y="578" font-family="Liberation Sans,Arial,sans-serif" font-size="13" fill="#4a4a4a">1</text>
<text x="705.800" y="572.600" font-family="Liberation Sans,Arial,sans-serif" font-size="13" fill="#4a4a4a">2</text>

<!-- view cube -->
<defs><linearGradient id="cubeg" x1="0" x2="0" y1="0" y2="1"><stop offset="0" stop-color="#d2d2d6"/><stop offset="1" stop-color="#b6b6ba"/></linearGradient><filter id="blur2" x="-20%" y="-50%" width="140%" height="200%"><feGaussianBlur stdDeviation="3"/></filter></defs>
<ellipse cx="1843" cy="283" rx="34" ry="4.500" fill="#000" opacity=".28" filter="url(#blur2)"/>
<rect x="1811.500" y="217.500" width="62.500" height="61.500" fill="url(#cubeg)" fill-opacity=".5" stroke="#b9babd" stroke-width="1"/>
<rect x="1824" y="228" width="38" height="40" fill="#dfe1ea" fill-opacity=".42"/>
<text x="1843" y="255.500" text-anchor="middle" font-family="Liberation Sans,Arial,sans-serif" font-size="16.500" fill="#7d838f" textLength="36" lengthAdjust="spacingAndGlyphs">BACK</text>
<text x="1863" y="213.500" font-family="Liberation Sans,Arial,sans-serif" font-size="16" font-weight="bold" fill="#4a4fc6" textLength="9" lengthAdjust="spacingAndGlyphs">Z</text>
<text x="1797" y="280" font-family="Liberation Sans,Arial,sans-serif" font-size="15" fill="#f08088" textLength="9" lengthAdjust="spacingAndGlyphs">X</text>
<path d="M1808 274.500h4" stroke="#f4a0a6" stroke-width="1.500"/>
<path d="M1875.500 277l3.500-1v8l-3.500-2z" fill="#1fc01f"/>

</svg>

<div class="abs" style="left:240px;top:284px;width:312.5px;height:659px;background:#f0f0f0;border:1px solid #c8c8c8"></div>
<div class="abs" style="left:241px;top:314px;width:310.5px;height:1px;background:#d8d8d8"></div>
<div class="abs" style="left:241px;top:898px;width:310.5px;height:1px;background:#d8d8d8"></div>
<div class="abs" style="left:541.5px;top:315px;width:7.5px;height:583px;background:#d0d0d0"></div>
<div class="abs" style="left:541.5px;top:316px;width:7.5px;height:451px;background:#8e8e8e;border-radius:3.500px"></div>
<svg style="left:247px;top:293px" width="12" height="12" viewBox="0 0 12 12"><circle cx="6" cy="6" r="5.600" fill="#1c1c1c"/><rect x="2.600" y="5" width="6.800" height="2" fill="#f0f0f0"/></svg>
<div class="t" style="left:270.30px;top:291.72px;font-size:14.5px;color:#5c5c5c;transform:scaleX(0.8535);">MEASURE</div>
<div class="t" style="left:256.00px;top:327.52px;font-size:14.5px;color:#3a3a3a;transform:scaleX(0.8947);">Selection Filter</div>
<div class="t" style="left:256.00px;top:364.92px;font-size:14.5px;color:#3a3a3a;transform:scaleX(0.9105);">Precision</div>
<div class="t" style="left:256.00px;top:402.32px;font-size:14.5px;color:#3a3a3a;transform:scaleX(0.9306);">Secondary Units</div>
<div class="t" style="left:256.00px;top:439.72px;font-size:14.5px;color:#3a3a3a;transform:scaleX(0.9192);">Restart Selection</div>
<div class="t" style="left:256.00px;top:477.22px;font-size:14.5px;color:#3a3a3a;transform:scaleX(0.9283);">Show Snap Points</div>
<div class="abs" style="left:384.5px;top:355.5px;width:127.5px;height:32.5px;background:#fff;border:1px solid #d2d2d2;border-radius:3px"></div>
<div class="t" style="left:393.70px;top:364.92px;font-size:14.5px;color:#3a3a3a;transform:scaleX(0.9124);">0.123</div>
<div class="abs" style="left:497px;top:369px;width:0;height:0;border-left:4px solid transparent;border-right:4px solid transparent;border-top:5px solid #1e1e1e"></div>
<div class="abs" style="left:384.5px;top:393px;width:127.5px;height:32.5px;background:#fff;border:1px solid #d2d2d2;border-radius:3px"></div>
<div class="t" style="left:393.70px;top:402.42px;font-size:14.5px;color:#3a3a3a;transform:scaleX(0.8624);">None</div>
<div class="abs" style="left:497px;top:406.5px;width:0;height:0;border-left:4px solid transparent;border-right:4px solid transparent;border-top:5px solid #1e1e1e"></div>
<div class="abs" style="left:384.5px;top:317px;width:29px;height:33.5px;background:#1b8fd6"></div>
<svg style="left:380px;top:312px" width="120" height="150" viewBox="0 0 864 1080">
<defs><g id="cur"><path d="M0 0V78L18 62 32 95 46 89 32 57 55 55z" fill="#fff" stroke="#333" stroke-width="7" stroke-linejoin="round"/></g></defs>
<!-- filter 1 -->
<path d="M70 130l40-35h85l-45 35z" fill="#f4f7f0" stroke="#2f6b2c" stroke-width="7" stroke-linejoin="round"/>
<path d="M70 130h80v85H70z" fill="#8fc160" stroke="#2f6b2c" stroke-width="8" stroke-linejoin="round"/>
<path d="M150 130l45-35v85l-45 35z" fill="#dfe8d6" stroke="#2f6b2c" stroke-width="7" stroke-linejoin="round"/>
<use href="#cur" x="155" y="128"/>
<!-- filter 2 -->
<path d="M340 130l38-35h77v70l-40 35h-75z" fill="#8cc05e" stroke="#2f6b2c" stroke-width="8" stroke-linejoin="round"/>
<path d="M340 130h75v70M415 130l40-35" fill="none" stroke="#2f6b2c" stroke-width="7"/>
<use href="#cur" x="402" y="140"/>
<!-- filter 3 -->
<rect x="592" y="92" width="66" height="58" rx="10" fill="#e4e8e0" stroke="#2f6b2c" stroke-width="8"/>
<rect x="592" y="152" width="66" height="56" rx="6" fill="#8cc05e" stroke="#2f6b2c" stroke-width="8"/>
<use href="#cur" x="672" y="128"/>
<!-- restart -->
<path d="M120 905L70 950 130 985V962Q170 962 168 992Q165 1018 130 1015L125 1030Q200 1040 200 985Q198 925 122 930z" fill="#6cb84a" stroke="#2f6b2c" stroke-width="8" stroke-linejoin="round"/>
</svg>

<div class="abs" style="left:391px;top:476px;width:16px;height:16px;border:1.500px solid #5e5e5e;border-radius:4px;background:linear-gradient(#dcdcdc,#c2c2c2)"></div>
<div class="abs" style="left:242px;top:509px;width:294px;height:1px;background:#d6d6d6"></div>
<div class="abs" style="left:242px;top:597px;width:294px;height:1px;background:#d6d6d6"></div>
<div class="abs" style="left:252.5px;top:530px;width:0;height:0;border-left:5.5px solid transparent;border-right:5.5px solid transparent;border-top:7.5px solid #222"></div>
<div class="t" style="left:271.00px;top:527.02px;font-size:14.5px;color:#303030;transform:scaleX(0.9795);font-weight:bold;">Results</div>
<div class="abs" style="left:252.5px;top:617.3px;width:0;height:0;border-left:5.5px solid transparent;border-right:5.5px solid transparent;border-top:7.5px solid #222"></div>
<div class="t" style="left:271.00px;top:614.32px;font-size:14.5px;color:#303030;transform:scaleX(0.9535);font-weight:bold;">Selection 1</div>
<div class="t" style="left:256.00px;top:564.72px;font-size:14.5px;color:#3a3a3a;transform:scaleX(0.9039);">Distance</div>
<div class="t" style="left:388.60px;top:564.72px;font-size:14.5px;color:#3a3a3a;transform:scaleX(0.8723);">0.00 mm</div>
<div class="t" style="left:256.00px;top:651.22px;font-size:14.5px;color:#b6b6b6;transform:scaleX(0.9162);">Edge selected</div>
<div class="t" style="left:256.00px;top:689.12px;font-size:14.5px;color:#3a3a3a;transform:scaleX(0.9018);">Length</div>
<div class="t" style="left:388.60px;top:689.12px;font-size:14.5px;color:#3a3a3a;transform:scaleX(0.8857);">5.655 mm</div>
<div class="t" style="left:256.00px;top:726.72px;font-size:14.5px;color:#3a3a3a;transform:scaleX(0.8862);">Radius</div>
<div class="t" style="left:388.60px;top:726.72px;font-size:14.5px;color:#3a3a3a;transform:scaleX(0.8723);">0.90 mm</div>
<div class="t" style="left:256.00px;top:764.02px;font-size:14.5px;color:#3a3a3a;transform:scaleX(0.8670);">Diameter</div>
<div class="t" style="left:388.60px;top:764.02px;font-size:14.5px;color:#3a3a3a;transform:scaleX(0.8723);">1.80 mm</div>
<div class="t" style="left:256.00px;top:801.72px;font-size:14.5px;color:#3a3a3a;transform:scaleX(0.8995);">Center Position X</div>
<div class="t" style="left:388.60px;top:801.72px;font-size:14.5px;color:#3a3a3a;transform:scaleX(0.8920);">100.835 mm</div>
<div class="t" style="left:256.00px;top:839.12px;font-size:14.5px;color:#3a3a3a;transform:scaleX(0.9105);">Center Position Y</div>
<div class="t" style="left:388.60px;top:839.12px;font-size:14.5px;color:#3a3a3a;transform:scaleX(0.8879);">75.204 mm</div>
<div class="t" style="left:256.00px;top:876.52px;font-size:14.5px;color:#3a3a3a;transform:scaleX(0.9060);">Center Position Z</div>
<div class="t" style="left:388.60px;top:876.52px;font-size:14.5px;color:#3a3a3a;transform:scaleX(0.8879);">52.537 mm</div>
<svg style="left:251px;top:913px" width="16" height="16" viewBox="0 0 16 16"><circle cx="8" cy="8" r="7.600" fill="#111"/><circle cx="8" cy="4.300" r="1.500" fill="#fff"/><path d="M6 6.800h3.200v4.900h1.100v1.400H5.700v-1.400h1.200v-3.500H6z" fill="#fff"/></svg>
<div class="abs" style="left:463px;top:909px;width:75px;height:24px;border:1px solid #b8b8b8;background:linear-gradient(#efefef,#e6e6e6)"></div>
<div class="t" style="left:479.80px;top:913.02px;font-size:16.5px;color:#8c8c8c;transform:scaleX(0.9433);">Close</div>
<div class="abs" style="left:811.5px;top:983px;width:295.5px;height:29.5px;background:#f0f0f0"></div>
<svg style="left:800px;top:975px" width="320" height="45" viewBox="0 0 1920 270">
<g fill="#2b2b2b"><path d="M250 122h38l-19 26zM1082 122h38l-19 26zM1306 122h38l-19 26zM1537 122h38l-19 26zM1772 122h38l-19 26z"/></g>
<!-- orbit -->
<g fill="none" stroke="#333" stroke-width="9">
<path d="M148 95V190" stroke-width="13" stroke="#555"/><path d="M148 95V190" stroke-width="5" stroke="#eee"/>
<path d="M128 105l20-28 20 28z" fill="#eee" stroke-width="6"/>
<path d="M175 118Q215 135 195 158Q165 182 105 165"/><path d="M120 118Q85 135 105 165"/>
<path d="M128 148l-30 17 28 22z" fill="#333" stroke-width="4"/>
</g>
<!-- look at -->
<g stroke="#555" stroke-width="8" fill="none" stroke-linejoin="round">
<path d="M340 120h112v68H340zM340 120l40-32v25l38-28 12 8v27" fill="#ececec"/>
<rect x="362" y="140" width="68" height="32" fill="#b5b5b5" stroke-width="6"/>
</g>
<!-- pan hand -->
<path d="M560 185Q540 160 532 140Q540 128 555 145V100Q563 88 572 100V92Q580 80 590 92V96Q600 84 610 98V108Q620 98 628 110V150Q625 175 610 188z" fill="#f4f6fa" stroke="#444" stroke-width="7" stroke-linejoin="round"/>
<path d="M572 100v35M590 94v40M610 100v36" stroke="#444" stroke-width="6" fill="none"/>
<!-- zoom -->
<circle cx="762" cy="128" r="30" fill="#dfeaf2" stroke="#4a4a4a" stroke-width="9"/>
<path d="M783 150l32 32" stroke="#3a3a3a" stroke-width="14" stroke-linecap="round"/>
<path d="M812 95h32M828 80v30M814 128h28" stroke="#333" stroke-width="7" fill="none"/>
<!-- zoom window -->
<circle cx="968" cy="126" r="42" fill="#e8e8e8" stroke="#555" stroke-width="9"/>
<rect x="945" y="104" width="44" height="42" rx="6" fill="#f6f6f6" stroke="#555" stroke-width="7"/>
<path d="M1000 158l34 32" stroke="#3a3a3a" stroke-width="14" stroke-linecap="round"/>
<!-- display -->
<rect x="1174" y="84" width="108" height="86" rx="5" fill="#e6e6e6" stroke="#555" stroke-width="8"/>
<rect x="1188" y="97" width="80" height="58" fill="#8fb2e0" stroke="#5f7fb0" stroke-width="4"/>
<path d="M1212 172h34l8 18h-50z" fill="#9a9a9a" stroke="#666" stroke-width="4"/>
<!-- grid -->
<rect x="1402" y="82" width="112" height="110" fill="#c3c8d6" stroke="#555" stroke-width="8"/>
<path d="M1424 82v110M1446 82v110M1468 82v110M1490 82v110M1402 104h112M1402 126h112M1402 148h112M1402 170h112" stroke="#6c7080" stroke-width="5" fill="none"/>
<!-- viewports -->
<rect x="1634" y="86" width="110" height="96" rx="6" fill="#88aadc" stroke="#3e68b0" stroke-width="8"/>
<path d="M1689 86v96M1634 134h110" stroke="#3e68b0" stroke-width="9" fill="none"/>
<path d="M1648 100h28v20h-28zM1702 100h28v20h-28zM1648 148h28v20h-28zM1702 148h28v20h-28z" fill="#a9c2e8"/>
</svg>
<svg style="left:1884px;top:987px" width="22" height="21" viewBox="0 0 22 21"><path d="M11 1.500L20.500 19H1.500z" fill="#f2d21c" stroke="#8a7a10" stroke-width="1.200" stroke-linejoin="round"/><path d="M11 3.500L18.500 18H3.500z" fill="#ffe838" opacity=".6"/><path d="M11 7.500v6M11 15v2" stroke="#5a1a10" stroke-width="2"/></svg>

<div class="t" style="left:1784.00px;top:991.02px;font-size:14.5px;color:#3a3a3a;transform:scaleX(0.9938);font-weight:bold;">2 selections</div>
<div class="abs" style="left:0;top:1017.500px;width:1920px;height:62.500px;background:#f0f0f0;border-top:2px solid #d4d4d4"></div>
<div class="abs" style="left:0;top:1077px;width:1920px;height:3px;background:#2b2b2b"></div>
<div class="abs" style="left:0;top:1077px;width:60px;height:3px;background:#000"></div>
<div class="abs" style="left:180px;top:1029px;width:1165px;height:7px;background:#e08ee8"></div>
<svg style="left:0;top:0" width="1920" height="1080" viewBox="0 0 1920 1080" pointer-events="none">
<defs>
<linearGradient id="tlg" x1="0" x2="1" y1="0" y2="1"><stop offset="0" stop-color="#ececec"/><stop offset="1" stop-color="#c6c6c6"/></linearGradient>
<g id="tl-j"><path d="M5.300 .7H19.300V15L14.800 19.300H.7V5.300z" fill="url(#tlg)" stroke="#777" stroke-width="1.400" stroke-linejoin="round"/><rect x="-4.200" y="-2.500" width="8.400" height="5" rx="2.500" transform="translate(7.300 12.300) rotate(-40)" fill="#e2e2e2" stroke="#858585" stroke-width="1.500"/><rect x="-4.200" y="-2.500" width="8.400" height="5" rx="2.500" transform="translate(12.300 8.200) rotate(-40)" fill="none" stroke="#858585" stroke-width="1.500"/></g>
<g id="tl-f"><rect x="1.400" y=".7" width="7.600" height="18.700" fill="#fafafa" stroke="#7a7a7a" stroke-width="1.400"/><rect x="9.200" y="0" width="11" height="8.300" fill="#4fa6e6"/></g>
<g id="tl-s"><rect x="2.500" y="1.800" width="15.500" height="15.700" fill="none" stroke="#34506e" stroke-width="1.300" stroke-dasharray="4.500 2.500" stroke-dashoffset="-1.500"/><g fill="#2b5c9c"><circle cx="2.500" cy="1.800" r="1.500"/><circle cx="18" cy="1.800" r="1.500"/><circle cx="2.500" cy="17.500" r="1.500"/></g><path d="M11.500 18.500L17.800 11.300 19.800 13 13.500 20.200z" fill="#f0b93e"/><path d="M11.500 18.500l2 1.700-2.800.9z" fill="#6a6a5a"/><circle cx="19.300" cy="11.300" r="1.900" fill="#ea4c50"/></g>
</defs>
<path d="M192.500 1070.5H1333" stroke="#c4c4c4" stroke-width="1.6" fill="none"/>
<use href="#tl-j" x="182" y="1039"/>
<path d="M192.5 1062.500v7.500" stroke="#c8c8c8" stroke-width="1.800" fill="none"/>
<use href="#tl-j" x="212" y="1039"/>
<path d="M222.5 1062.500v7.500" stroke="#c8c8c8" stroke-width="1.800" fill="none"/>
<use href="#tl-j" x="242" y="1039"/>
<path d="M252.5 1062.500v7.500" stroke="#c8c8c8" stroke-width="1.800" fill="none"/>
<use href="#tl-j" x="272" y="1039"/>
<path d="M282.5 1062.500v7.500" stroke="#c8c8c8" stroke-width="1.800" fill="none"/>
<use href="#tl-j" x="302" y="1039"/>
<path d="M312.5 1062.500v7.500" stroke="#c8c8c8" stroke-width="1.800" fill="none"/>
<use href="#tl-j" x="332" y="1039"/>
<path d="M342.5 1062.500v7.500" stroke="#c8c8c8" stroke-width="1.800" fill="none"/>
<use href="#tl-j" x="362" y="1039"/>
<path d="M372.5 1062.500v7.500" stroke="#c8c8c8" stroke-width="1.800" fill="none"/>
<use href="#tl-j" x="392" y="1039"/>
<path d="M402.5 1062.500v7.500" stroke="#c8c8c8" stroke-width="1.800" fill="none"/>
<use href="#tl-j" x="422" y="1039"/>
<path d="M432.5 1062.500v7.500" stroke="#c8c8c8" stroke-width="1.800" fill="none"/>
<use href="#tl-j" x="452" y="1039"/>
<path d="M462.5 1062.500v7.500" stroke="#c8c8c8" stroke-width="1.800" fill="none"/>
<use href="#tl-j" x="482" y="1039"/>
<path d="M492.5 1062.500v7.500" stroke="#c8c8c8" stroke-width="1.800" fill="none"/>
<use href="#tl-j" x="512" y="1039"/>
<path d="M522.5 1062.500v7.500" stroke="#c8c8c8" stroke-width="1.800" fill="none"/>
<use href="#tl-j" x="542" y="1039"/>
<path d="M552.5 1062.500v7.500" stroke="#c8c8c8" stroke-width="1.800" fill="none"/>
<use href="#tl-j" x="572" y="1039"/>
<path d="M582.5 1062.500v7.500" stroke="#c8c8c8" stroke-width="1.800" fill="none"/>
<use href="#tl-f" x="602" y="1039"/>
<path d="M612.5 1062.500v7.500" stroke="#c8c8c8" stroke-width="1.800" fill="none"/>
<use href="#tl-s" x="632" y="1039"/>
<path d="M642.5 1062.500v7.500" stroke="#c8c8c8" stroke-width="1.800" fill="none"/>
<use href="#tl-j" x="662" y="1039"/>
<path d="M672.5 1062.500v7.500" stroke="#c8c8c8" stroke-width="1.800" fill="none"/>
<use href="#tl-j" x="692" y="1039"/>
<path d="M702.5 1062.500v7.500" stroke="#c8c8c8" stroke-width="1.800" fill="none"/>
<use href="#tl-f" x="722" y="1039"/>
<path d="M732.5 1062.500v7.500" stroke="#c8c8c8" stroke-width="1.800" fill="none"/>
<use href="#tl-f" x="752" y="1039"/>
<path d="M762.5 1062.500v7.500" stroke="#c8c8c8" stroke-width="1.800" fill="none"/>
<use href="#tl-j" x="782" y="1039"/>
<path d="M792.5 1062.500v7.500" stroke="#c8c8c8" stroke-width="1.800" fill="none"/>
<use href="#tl-j" x="812" y="1039"/>
<path d="M822.5 1062.500v7.500" stroke="#c8c8c8" stroke-width="1.800" fill="none"/>
<use href="#tl-j" x="842" y="1039"/>
<path d="M852.5 1062.500v7.500" stroke="#c8c8c8" stroke-width="1.800" fill="none"/>
<use href="#tl-j" x="872" y="1039"/>
<path d="M882.5 1062.500v7.500" stroke="#c8c8c8" stroke-width="1.800" fill="none"/>
<use href="#tl-j" x="902" y="1039"/>
<path d="M912.5 1062.500v7.500" stroke="#c8c8c8" stroke-width="1.800" fill="none"/>
<use href="#tl-j" x="932" y="1039"/>
<path d="M942.5 1062.500v7.500" stroke="#c8c8c8" stroke-width="1.800" fill="none"/>
<use href="#tl-j" x="962" y="1039"/>
<path d="M972.5 1062.500v7.500" stroke="#c8c8c8" stroke-width="1.800" fill="none"/>
<use href="#tl-j" x="992" y="1039"/>
<path d="M1002.5 1062.500v7.500" stroke="#c8c8c8" stroke-width="1.800" fill="none"/>
<use href="#tl-j" x="1022" y="1039"/>
<path d="M1032.5 1062.500v7.500" stroke="#c8c8c8" stroke-width="1.800" fill="none"/>
<use href="#tl-j" x="1052" y="1039"/>
<path d="M1062.5 1062.500v7.500" stroke="#c8c8c8" stroke-width="1.800" fill="none"/>
<use href="#tl-j" x="1082" y="1039"/>
<path d="M1092.5 1062.500v7.500" stroke="#c8c8c8" stroke-width="1.800" fill="none"/>
<use href="#tl-j" x="1112" y="1039"/>
<path d="M1122.5 1062.500v7.500" stroke="#c8c8c8" stroke-width="1.800" fill="none"/>
<use href="#tl-j" x="1142" y="1039"/>
<path d="M1152.5 1062.500v7.500" stroke="#c8c8c8" stroke-width="1.800" fill="none"/>
<use href="#tl-f" x="1172" y="1039"/>
<path d="M1182.5 1062.500v7.500" stroke="#c8c8c8" stroke-width="1.800" fill="none"/>
<use href="#tl-f" x="1202" y="1039"/>
<path d="M1212.5 1062.500v7.500" stroke="#c8c8c8" stroke-width="1.800" fill="none"/>
<use href="#tl-j" x="1232" y="1039"/>
<path d="M1242.5 1062.500v7.500" stroke="#c8c8c8" stroke-width="1.800" fill="none"/>
<use href="#tl-j" x="1262" y="1039"/>
<path d="M1272.5 1062.500v7.500" stroke="#c8c8c8" stroke-width="1.800" fill="none"/>
<use href="#tl-j" x="1292" y="1039"/>
<path d="M1302.5 1062.500v7.500" stroke="#c8c8c8" stroke-width="1.800" fill="none"/>
<use href="#tl-j" x="1322" y="1039"/>
<path d="M1332.5 1062.500v7.500" stroke="#c8c8c8" stroke-width="1.800" fill="none"/>
<g fill="#4a4a4a">
<path d="M14 1040h2.6v20H14zM17 1050l11.5-9.5v19z"/>
<path d="M44 1050l11-8.5v17zM56.5 1045h3v10h-3z"/>
<path d="M76 1039.500l15 10.500-15 10.500z"/>
<path d="M106 1045h3v10h-3zM111 1041.500l11 8.500-11 8.500z"/>
<path d="M138 1040.500l11.500 9.500-11.500 9.500zM150.500 1040h2.600v20h-2.600z"/>
</g>
<path d="M1052 1034l5-6M1059 1034l5-6M1066 1034l5-6" stroke="#6a2b6e" stroke-width="2.2" fill="none"/>
<path d="M1340 1032h15.500v2l-6 7v30h-3v-30l-6.500-7z" fill="#555"/>
<g transform="translate(1893 1050)" fill="#9a9a9a"><circle r="7.200"/><g id="gt"><rect x="-2" y="-10" width="4" height="20"/></g><use href="#gt" transform="rotate(45)"/><use href="#gt" transform="rotate(90)"/><use href="#gt" transform="rotate(135)"/><circle r="3.300" fill="#f0f0f0"/></g>
</svg>


</body></html>
